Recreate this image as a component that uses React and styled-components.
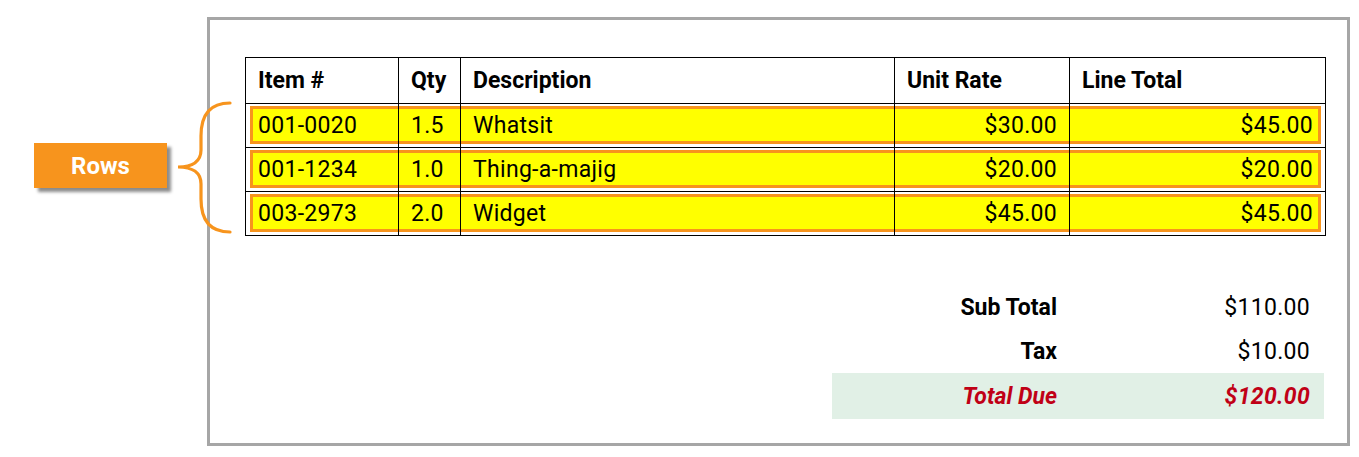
import React from 'react';
import styled, { createGlobalStyle } from 'styled-components';

const GlobalStyle = createGlobalStyle`
  html, body {
    margin: 0;
    padding: 0;
    background: #ffffff;
  }
  body {
    font-family: Roboto, "Liberation Sans", Arial, sans-serif;
    color: #000;
  }
`;

const columns = [
  { key: 'item', label: 'Item #', align: 'left' },
  { key: 'qty', label: 'Qty', align: 'left' },
  { key: 'desc', label: 'Description', align: 'left' },
  { key: 'rate', label: 'Unit Rate', align: 'right' },
  { key: 'total', label: 'Line Total', align: 'right' },
];

const rows = [
  { item: '001-0020', qty: '1.5', desc: 'Whatsit', rate: '$30.00', total: '$45.00' },
  { item: '001-1234', qty: '1.0', desc: 'Thing-a-majig', rate: '$20.00', total: '$20.00' },
  { item: '003-2973', qty: '2.0', desc: 'Widget', rate: '$45.00', total: '$45.00' },
];

const totals = [
  { label: 'Sub Total', value: '$110.00' },
  { label: 'Tax', value: '$10.00' },
  { label: 'Total Due', value: '$120.00', due: true },
];

const App = () => {
  return (
    <>
      <GlobalStyle />
      <Page>
        <Annotation>
          <Callout>Rows</Callout>
          <Brace viewBox="0 0 65 135" width="65" height="135">
            <path
              d="M60 3 C40 3 31 15 31 36 L31 50 C31 61 23 67 8 67 C23 67 31 73 31 84 L31 99 C31 120 40 132 60 132"
              fill="none"
              stroke="#f7941d"
              strokeWidth="3.2"
              strokeLinecap="round"
            />
          </Brace>
        </Annotation>

        <Frame>
          <Table>
            <HeadRow>
              {columns.map((c) => (
                <Cell key={c.key} $align="left" $head>{c.label}</Cell>
              ))}
            </HeadRow>
            {rows.map((r) => (
              <DataRow key={r.item}>
                {columns.map((c) => (
                  <Cell key={c.key} $align={c.align}>{r[c.key]}</Cell>
                ))}
              </DataRow>
            ))}
          </Table>

          <Summary>
            {totals.map((t) => (
              <SummaryRow key={t.label} $due={t.due}>
                <SummaryLabel>{t.label}</SummaryLabel>
                <SummaryValue $due={t.due}>{t.value}</SummaryValue>
              </SummaryRow>
            ))}
          </Summary>
        </Frame>
      </Page>
    </>
  );
};

const Page = styled.div`
  display: flex;
  align-items: flex-start;
  width: 1359px;
  height: 457px;
  padding: 17px 0 0 34px;
  box-sizing: border-box;
`;

const Annotation = styled.div`
  display: flex;
  align-items: center;
  margin-top: 83px;
  margin-right: -28px;
  position: relative;
  z-index: 1;
`;

const Callout = styled.div`
  width: 133px;
  height: 45px;
  margin-top: -4px;
  display: flex;
  align-items: center;
  justify-content: center;
  background: #f7941d;
  color: #ffffff;
  font-weight: 700;
  font-size: 24px;
  box-shadow: 4px 4px 3px rgba(0, 0, 0, 0.45);
`;

const Brace = styled.svg`
  display: block;
  margin-left: 3px;
`;

const Frame = styled.div`
  width: 1143px;
  height: 429px;
  box-sizing: border-box;
  border: 3px solid #a6a6a6;
  padding: 37px 21px 0 35px;
  display: flex;
  flex-direction: column;
`;

const Table = styled.div`
  width: 1081px;
  border: 1px solid #000;
  border-bottom: none;
  box-sizing: border-box;
`;

const RowBase = styled.div`
  display: grid;
  grid-template-columns: 153px 62px 434px 175px 1fr;
  border-bottom: 1px solid #000;
`;

const HeadRow = styled(RowBase)`
  height: 45px;
  font-weight: 700;
`;

const DataRow = styled(RowBase)`
  height: 43px;
  position: relative;
  isolation: isolate;

  &::before {
    content: '';
    position: absolute;
    inset: 2px 4px 3px 4px;
    background: #ffff00;
    border: 3px solid #f7941d;
    z-index: -1;
  }
`;

const Cell = styled.div`
  display: flex;
  align-items: center;
  justify-content: ${(p) => (p.$align === 'right' ? 'flex-end' : 'flex-start')};
  padding: 0 12px;
  font-size: 23px;
  letter-spacing: ${(p) => (p.$head ? '0' : '0.3px')};
  border-right: 1px solid #000;

  &:last-child {
    border-right: none;
  }
`;

const Summary = styled.div`
  align-self: flex-end;
  margin-top: 49px;
  margin-right: 2px;
  display: flex;
  flex-direction: column;
`;

const SummaryRow = styled.div`
  display: grid;
  grid-template-columns: 238px 254px;
  height: ${(p) => (p.$due ? '46px' : '44px')};
  align-items: center;
  background: ${(p) => (p.$due ? '#e1f0e6' : 'transparent')};
  color: ${(p) => (p.$due ? '#c00016' : '#000')};
  font-style: ${(p) => (p.$due ? 'italic' : 'normal')};
  font-size: 23px;
`;

const SummaryLabel = styled.span`
  font-weight: 700;
  text-align: right;
  padding-right: 13px;
`;

const SummaryValue = styled.span`
  font-weight: ${(p) => (p.$due ? 700 : 400)};
  text-align: right;
  padding-right: 14px;
  letter-spacing: 0.3px;
`;

export default App;
